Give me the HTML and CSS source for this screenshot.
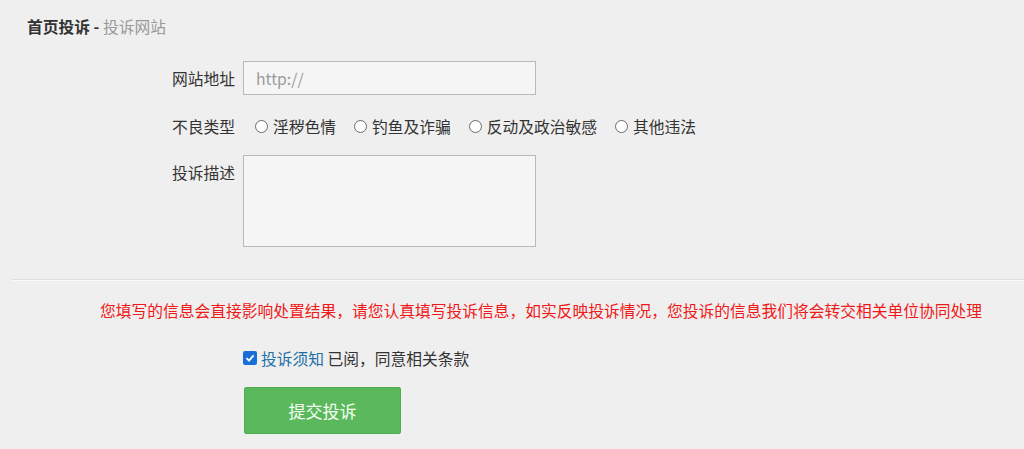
FILE: index.html
```html
<!DOCTYPE html>
<html lang="zh">

<head>
    <meta charset="UTF-8">
    <title>投诉网站</title>
    <link rel="stylesheet" href="styles.css">
</head>

<body>
    <div class="crumb">
        <b>首页投诉 -</b> <span>投诉网站</span>
    </div>

    <form class="form">
        <div class="row">
            <label class="label">网站地址</label>
            <input class="text" type="text" placeholder="http://">
        </div>

        <div class="row radios">
            <label class="label">不良类型</label>
            <label class="opt"><span class="dot"></span>淫秽色情</label>
            <label class="opt"><span class="dot"></span>钓鱼及诈骗</label>
            <label class="opt"><span class="dot"></span>反动及政治敏感</label>
            <label class="opt"><span class="dot"></span>其他违法</label>
        </div>

        <div class="row top">
            <label class="label desc">投诉描述</label>
            <textarea class="area"></textarea>
        </div>
    </form>

    <div class="line"></div>

    <p class="notice">您填写的信息会直接影响处置结果，请您认真填写投诉信息，如实反映投诉情况，您投诉的信息我们将会转交相关单位协同处理</p>

    <div class="agree">
        <span class="check">
            <svg width="10" height="10" viewBox="0 0 10 10">
                <path d="M1.5 5.2 L4 7.6 L8.6 2.4" fill="none" stroke="#fff" stroke-width="1.8" />
            </svg>
        </span>
        <a class="link">投诉须知</a>&nbsp;已阅，同意相关条款
    </div>

    <div class="submit">
        <button class="btn" type="button">提交投诉</button>
    </div>
</body>

</html>
```

FILE: styles.css
```css
* {
    padding: 0;
    margin: 0;
    box-sizing: border-box;
}

body {
    background: #efefef;
    font-family: "Microsoft YaHei", "Noto Sans CJK SC", sans-serif;
    font-size: 15.75px;
    color: #333;
    overflow: hidden;
}

.crumb {
    padding: 17px 0 0 27px;
    height: 40px;
    line-height: 20px;
}

.crumb b {
    color: #333;
}

.crumb span {
    color: #999;
}

.form {
    padding: 21px 0 0 172px;
}

.row {
    display: flex;
    align-items: center;
}

.row.top {
    align-items: flex-start;
    margin-top: 18px;
}

.label {
    width: 71px;
    flex: none;
    color: #333;
}

.desc {
    padding-top: 6px;
}

.text {
    width: 293px;
    height: 34px;
    border: 1px solid #b9b9b9;
    background: #f5f5f5;
    padding: 0 12px;
    font: inherit;
    color: #333;
    outline: none;
}

.text::placeholder {
    color: #9a9a9a;
}

.radios {
    margin-top: 20px;
    height: 22px;
}

.opt {
    display: flex;
    align-items: center;
    margin-right: 18px;
}

.label + .opt {
    margin-left: 12px;
}

.dot {
    width: 13px;
    height: 13px;
    border: 1px solid #6a6a6a;
    border-radius: 50%;
    background: #fff;
    margin-right: 5px;
}

.area {
    width: 293px;
    height: 92px;
    border: 1px solid #b9b9b9;
    background: #f5f5f5;
    resize: none;
    outline: none;
}

.line {
    margin: 32px 0 0 12px;
    height: 2px;
    border-top: 1px solid #dcdcdc;
    border-bottom: 1px solid #fafafa;
}

.notice {
    color: #f01818;
    padding-left: 100px;
    margin-top: 19px;
    line-height: 22px;
    white-space: nowrap;
}

.agree {
    margin: 25px 0 0 243px;
    display: flex;
    align-items: center;
    height: 22px;
}

.check {
    width: 14px;
    height: 14px;
    border-radius: 2px;
    background: #1a6ed8;
    display: flex;
    align-items: center;
    justify-content: center;
    margin-right: 4px;
}

.link {
    color: #1f6fa8;
}

.submit {
    padding: 18px 0 0 244px;
}

.btn {
    width: 157px;
    height: 47px;
    background: #5cb85c;
    border: 1px solid #4cae4c;
    border-radius: 2px;
    color: #f2fff2;
    font: inherit;
    font-size: 17px;
}
```
